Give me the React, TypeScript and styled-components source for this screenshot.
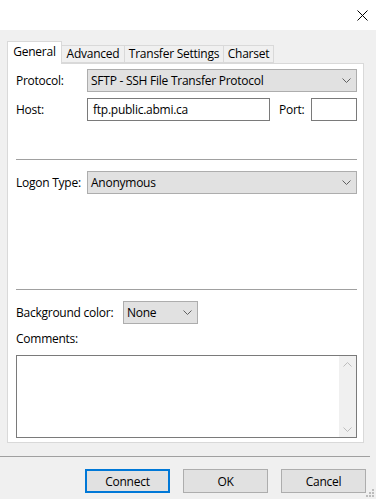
import styled, { createGlobalStyle } from "styled-components";

const GlobalStyle = createGlobalStyle`
  html, body {
    margin: 0;
    padding: 0;
  }
  body {
    font-family: "Open Sans", "Noto Sans", sans-serif;
    font-size: 12px;
    letter-spacing: -0.25px;
    color: #000;
  }
  * {
    box-sizing: border-box;
  }
`;

const Window = styled.div`
  position: relative;
  width: 376px;
  height: 499px;
  background: #f0f0f0;
  display: flex;
  flex-direction: column;
  overflow: hidden;
`;

const TitleBar = styled.div`
  height: 30px;
  background: #fff;
  display: flex;
  justify-content: flex-end;
  align-items: center;
  padding-right: 8px;
`;

const Body = styled.div`
  padding: 11px 12px 0 7px;
`;

const TabStrip = styled.div`
  display: flex;
  align-items: flex-end;
  height: 22px;
`;

const Tab = styled.div<{ $active?: boolean; $w: number }>`
  width: ${(p) => p.$w}px;
  height: ${(p) => (p.$active ? 23 : 18)}px;
  margin-bottom: ${(p) => (p.$active ? -1 : 0)}px;
  background: ${(p) => (p.$active ? "#fff" : "#f0f0f0")};
  border: 1px solid #d9d9d9;
  border-bottom: ${(p) => (p.$active ? "none" : "1px solid #d9d9d9")};
  border-left: ${(p) => (p.$active ? "1px solid #d9d9d9" : "none")};
  display: flex;
  justify-content: center;
  align-items: ${(p) => (p.$active ? "flex-start" : "center")};
  padding-top: ${(p) => (p.$active ? 2 : 0)}px;
  position: relative;
  z-index: ${(p) => (p.$active ? 1 : 0)};
  line-height: 16px;
  white-space: nowrap;
`;

const Panel = styled.div`
  height: 380px;
  background: #fff;
  border: 1px solid #d9d9d9;
  padding: 5px 6px 0 8px;
`;

const Row = styled.div<{ $top?: number }>`
  display: flex;
  align-items: center;
  height: 23px;
  margin-top: ${(p) => p.$top ?? 0}px;
`;

const Label = styled.span<{ $w?: number }>`
  width: ${(p) => (p.$w ? `${p.$w}px` : "auto")};
  flex-shrink: 0;
  white-space: nowrap;
`;

const Combo = styled.div<{ $w?: number }>`
  ${(p) => (p.$w ? `width: ${p.$w}px;` : "flex: 1;")}
  height: 23px;
  background: #e1e1e1;
  border: 1px solid #adadad;
  display: flex;
  align-items: center;
  justify-content: space-between;
  padding: 0 5px 0 3px;
  white-space: nowrap;
`;

const TextBox = styled.div<{ $w?: number }>`
  ${(p) => (p.$w ? `width: ${p.$w}px;` : "flex: 1;")}
  height: 23px;
  background: #fff;
  border: 1px solid #7a7a7a;
  display: flex;
  align-items: center;
  padding: 0 5px;
`;

const PortLabel = styled.span`
  flex: 1;
  margin-left: 9px;
`;

const Divider = styled.div<{ $top: number }>`
  height: 1px;
  background: #a0a0a0;
  margin-top: ${(p) => p.$top}px;
`;

const CommentsLabel = styled.div`
  margin-top: 7px;
  line-height: 16px;
`;

const Memo = styled.div`
  margin-top: 8px;
  height: 83px;
  border: 1px solid #7a7a7a;
  background: #fff;
  display: flex;
  justify-content: flex-end;
`;

const ScrollTrack = styled.div`
  width: 17px;
  background: #f0f0f0;
  display: flex;
  flex-direction: column;
  justify-content: space-between;
  align-items: center;
  padding: 6px 0 5px;
`;

const Footer = styled.div`
  margin: 13px 6px 0 0;
  border-top: 1px solid #a0a0a0;
  padding: 12px 4px 0 0;
  display: flex;
  justify-content: flex-end;
  gap: 13px;
`;

const Button = styled.div<{ $primary?: boolean }>`
  width: 85px;
  height: 24px;
  background: #e1e1e1;
  border: ${(p) => (p.$primary ? "2px solid #0078d7" : "1px solid #adadad")};
  display: flex;
  align-items: center;
  justify-content: center;
`;

const Grip = styled.svg`
  position: absolute;
  right: 1px;
  bottom: 1px;
`;

function Chevron({ up, color = "#606060" }: { up?: boolean; color?: string }) {
  return (
    <svg width="9" height="5" viewBox="0 0 9 5">
      <polyline
        points={up ? "0.5,4.5 4.5,0.5 8.5,4.5" : "0.5,0.5 4.5,4.5 8.5,0.5"}
        fill="none"
        stroke={color}
        strokeWidth="1"
      />
    </svg>
  );
}

export default function App() {
  return (
    <Window>
      <GlobalStyle />
      <TitleBar>
        <svg width="11" height="11" viewBox="0 0 11 11">
          <path d="M0.5 0.5 L10.5 10.5 M10.5 0.5 L0.5 10.5" stroke="#000" strokeWidth="1" />
        </svg>
      </TitleBar>
      <Body>
        <TabStrip>
          <Tab $active $w={55}>General</Tab>
          <Tab $w={63}>Advanced</Tab>
          <Tab $w={99}>Transfer Settings</Tab>
          <Tab $w={50}>Charset</Tab>
        </TabStrip>
        <Panel>
          <Row>
            <Label $w={71}>Protocol:</Label>
            <Combo>
              <span>SFTP - SSH File Transfer Protocol</span>
              <Chevron />
            </Combo>
          </Row>
          <Row $top={6}>
            <Label $w={71}>Host:</Label>
            <TextBox $w={183}>ftp.public.abmi.ca</TextBox>
            <PortLabel>Port:</PortLabel>
            <TextBox $w={46} />
          </Row>
          <Divider $top={38} />
          <Row $top={11}>
            <Label $w={71}>Logon Type:</Label>
            <Combo>
              <span>Anonymous</span>
              <Chevron />
            </Combo>
          </Row>
          <Divider $top={95} />
          <Row $top={11}>
            <Label $w={107}>Background color:</Label>
            <Combo $w={75}>
              <span>None</span>
              <Chevron />
            </Combo>
          </Row>
          <CommentsLabel>Comments:</CommentsLabel>
          <Memo>
            <ScrollTrack>
              <Chevron up color="#bdbdbd" />
              <Chevron color="#bdbdbd" />
            </ScrollTrack>
          </Memo>
        </Panel>
      </Body>
      <Footer>
        <Button $primary>Connect</Button>
        <Button>OK</Button>
        <Button>Cancel</Button>
      </Footer>
      <Grip width="9" height="9" viewBox="0 0 9 9">
        <g fill="#bcbcbc">
          <rect x="6" y="0" width="2" height="2" />
          <rect x="3" y="3" width="2" height="2" />
          <rect x="6" y="3" width="2" height="2" />
          <rect x="0" y="6" width="2" height="2" />
          <rect x="3" y="6" width="2" height="2" />
          <rect x="6" y="6" width="2" height="2" />
        </g>
      </Grip>
    </Window>
  );
}
